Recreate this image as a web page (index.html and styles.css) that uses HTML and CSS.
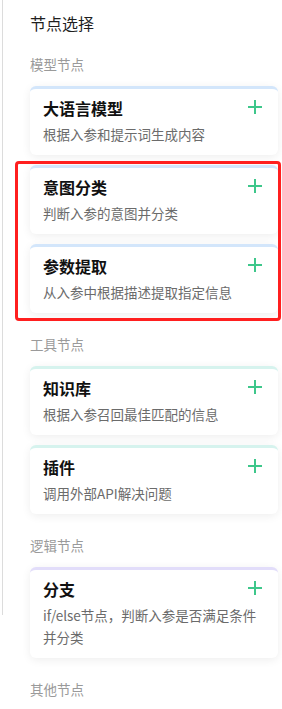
FILE: index.html
```html
<!DOCTYPE html>
<html lang="zh-CN">
<head>
<meta charset="utf-8">
<title>节点选择</title>
<link rel="stylesheet" href="styles.css">
</head>
<body>
<div class="panel">
  <h1 class="panel-title">节点选择</h1>

  <div class="section-label">模型节点</div>
  <div class="card-list">
    <div class="card card-blue">
      <div class="card-head"><span class="card-title">大语言模型</span><svg class="plus" viewBox="0 0 14 14"><path d="M7 0V14M0 7H14"/></svg></div>
      <div class="card-desc">根据入参和提示词生成内容</div>
    </div>
    <div class="highlight">
      <div class="card card-blue">
        <div class="card-head"><span class="card-title">意图分类</span><svg class="plus" viewBox="0 0 14 14"><path d="M7 0V14M0 7H14"/></svg></div>
        <div class="card-desc">判断入参的意图并分类</div>
      </div>
      <div class="card card-blue">
        <div class="card-head"><span class="card-title">参数提取</span><svg class="plus" viewBox="0 0 14 14"><path d="M7 0V14M0 7H14"/></svg></div>
        <div class="card-desc">从入参中根据描述提取指定信息</div>
      </div>
    </div>
  </div>

  <div class="section-label">工具节点</div>
  <div class="card-list">
    <div class="card card-teal">
      <div class="card-head"><span class="card-title">知识库</span><svg class="plus" viewBox="0 0 14 14"><path d="M7 0V14M0 7H14"/></svg></div>
      <div class="card-desc">根据入参召回最佳匹配的信息</div>
    </div>
    <div class="card card-teal">
      <div class="card-head"><span class="card-title">插件</span><svg class="plus" viewBox="0 0 14 14"><path d="M7 0V14M0 7H14"/></svg></div>
      <div class="card-desc">调用外部API解决问题</div>
    </div>
  </div>

  <div class="section-label">逻辑节点</div>
  <div class="card-list">
    <div class="card card-purple">
      <div class="card-head"><span class="card-title">分支</span><svg class="plus" viewBox="0 0 14 14"><path d="M7 0V14M0 7H14"/></svg></div>
      <div class="card-desc">if/else节点，判断入参是否满足条件并分类</div>
    </div>
  </div>

  <div class="section-label">其他节点</div>
</div>
</body>
</html>
```
FILE: styles.css
```css
html, body {
  margin: 0;
  padding: 0;
  background: #ffffff;
}

body {
  position: relative;
  font-family: "Noto Sans CJK SC", "Noto Sans", sans-serif;
  color: #1f1f1f;
}

body::before {
  content: "";
  position: absolute;
  left: 2px;
  top: 0;
  width: 1px;
  height: 615px;
  background: #dcdcdc;
}

.panel {
  padding: 11px 4px 0 30px;
  display: flex;
  flex-direction: column;
}

.panel-title {
  margin: 0;
  font-size: 16px;
  line-height: 24px;
  font-weight: 400;
  color: #1f1f1f;
}

.section-label {
  margin-top: 21px;
  font-size: 13.5px;
  line-height: 20px;
  color: #9a9a9a;
}

.panel-title + .section-label {
  margin-top: 19px;
}

.card-list {
  margin-top: 12px;
  display: flex;
  flex-direction: column;
  gap: 10px;
}

.highlight {
  position: relative;
  display: flex;
  flex-direction: column;
  gap: 10px;
}

.highlight::after {
  content: "";
  position: absolute;
  left: -15px;
  right: -3px;
  top: -4px;
  bottom: -8px;
  border: 3px solid #ff1f1f;
  border-radius: 4px;
  pointer-events: none;
}

.card {
  background: #ffffff;
  border-top: 3px solid #d5e7fb;
  border-radius: 6px;
  padding: 7px 16px 10px 13px;
  box-shadow: 0 2px 10px rgba(0, 0, 0, 0.07);
}

.card-blue { border-top-color: #d3e6fb; }
.card-teal { border-top-color: #d6f3ee; }
.card-purple { border-top-color: #e2ddfa; }

.card-head {
  display: flex;
  align-items: center;
  justify-content: space-between;
  height: 24px;
}

.card-title {
  font-size: 16px;
  line-height: 24px;
  font-weight: 700;
  color: #111111;
}

.plus {
  width: 14px;
  height: 14px;
  margin-top: -3px;
  stroke: #3ec78b;
  stroke-width: 2;
  fill: none;
}

.card-desc {
  margin-top: 3px;
  font-size: 13.5px;
  line-height: 22px;
  color: #6b6b6b;
}
```
